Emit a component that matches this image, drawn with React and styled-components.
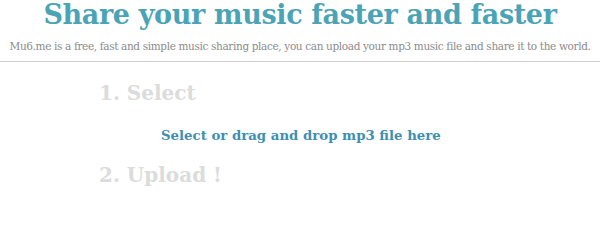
import React from "react";
import styled, { createGlobalStyle } from "styled-components";

const Global = createGlobalStyle`
  html, body { margin: 0; padding: 0; background: #ffffff; }
  body { font-family: "DejaVu Serif", Georgia, serif; }
`;

const Page = styled.div`
  width: 600px;
  height: 202px;
  overflow: hidden;
  display: flex;
  flex-direction: column;
`;

const Header = styled.header`
  display: flex;
  flex-direction: column;
  align-items: center;
  border-bottom: 1px solid #cfcfcf;
  padding-bottom: 7px;
`;

const Title = styled.h1`
  margin: 0;
  font-size: 27px;
  line-height: 30px;
  letter-spacing: -0.35px;
  font-weight: bold;
  color: #4ba4b6;
  white-space: nowrap;
`;

const Subtitle = styled.p`
  margin: 8px 0 0;
  font-size: 10.5px;
  line-height: 16px;
  letter-spacing: -0.36px;
  color: #8c8c8c;
  white-space: nowrap;
`;

const Steps = styled.section`
  display: flex;
  flex-direction: column;
  padding-left: 99px;
`;

const StepTitle = styled.h2`
  margin: ${(p) => p.$top}px 0 0;
  font-size: 20px;
  line-height: 26px;
  font-weight: bold;
  color: #dcdcdc;
  white-space: nowrap;
`;

const DropZone = styled.div`
  margin: 21px 0 0 62px;
  font-size: 13.3px;
  line-height: 18px;
  font-weight: bold;
  color: #3e8fb3;
  cursor: pointer;
  white-space: nowrap;
`;

export default function App() {
  return (
    <Page>
      <Global />
      <Header>
        <Title>Share your music faster and faster</Title>
        <Subtitle>
          Mu6.me is a free, fast and simple music sharing place, you can upload your mp3 music file and share it to the world.
        </Subtitle>
      </Header>
      <Steps>
        <StepTitle $top={18}>1. Select</StepTitle>
        <DropZone>Select or drag and drop mp3 file here</DropZone>
        <StepTitle $top={17}>2. Upload !</StepTitle>
      </Steps>
    </Page>
  );
}
